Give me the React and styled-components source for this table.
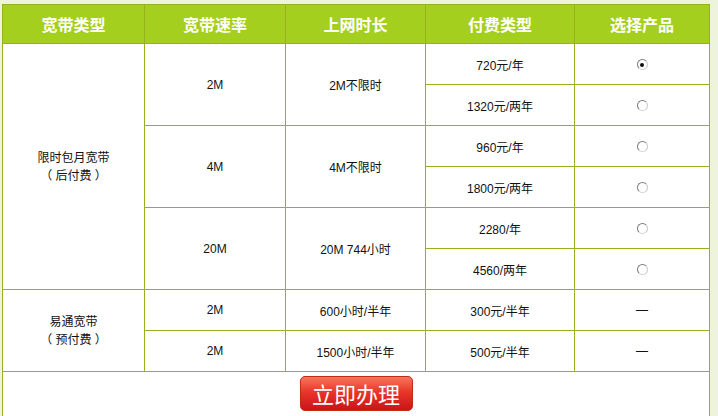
import styled, { createGlobalStyle } from 'styled-components';

const GlobalStyle = createGlobalStyle`
  html, body {
    margin: 0;
    padding: 0;
    background: #eef4dc;
  }
`

const plans = [
  {
    type: ["限时包月宽带", "（ 后付费 ）"],
    speeds: [
      { speed: "2M", time: "2M不限时", fees: ["720元/年", "1320元/两年"] },
      { speed: "4M", time: "4M不限时", fees: ["960元/年", "1800元/两年"] },
      { speed: "20M", time: "20M 744小时", fees: ["2280/年", "4560/两年"] },
    ],
    radio: true,
  },
  {
    type: ["易通宽带", "（ 预付费 ）"],
    speeds: [
      { speed: "2M", time: "600小时/半年", fees: ["300元/半年"] },
      { speed: "2M", time: "1500小时/半年", fees: ["500元/半年"] },
    ],
    radio: false,
  },
];

const Radio = ({ checked }) => (
  <RadioBox>{checked && <RadioDot />}</RadioBox>
);

const App = () => {
  let first = true;
  return <Page>
    <GlobalStyle />
    <Table>
      <colgroup>
        <col style={{ width: 142 }} />
        <col style={{ width: 141 }} />
        <col style={{ width: 140 }} />
        <col style={{ width: 149 }} />
        <col style={{ width: 135 }} />
      </colgroup>
      <thead>
        <tr>
          <Th>宽带类型</Th>
          <Th>宽带速率</Th>
          <Th>上网时长</Th>
          <Th>付费类型</Th>
          <Th>选择产品</Th>
        </tr>
      </thead>
      <tbody>
        {plans.map((plan, pi) => {
          const total = plan.speeds.reduce((n, s) => n + s.fees.length, 0);
          return plan.speeds.map((s, si) =>
            s.fees.map((fee, fi) => {
              const checked = plan.radio && first;
              if (plan.radio) first = false;
              return <tr key={`${pi}-${si}-${fi}`}>
                {si === 0 && fi === 0 &&
                  <Td rowSpan={total}>
                    <TypeName>{plan.type[0]}<br />{plan.type[1]}</TypeName>
                  </Td>}
                {fi === 0 && <Td rowSpan={s.fees.length}>{s.speed}</Td>}
                {fi === 0 && <Td rowSpan={s.fees.length}>{s.time}</Td>}
                <Td>{fee}</Td>
                <Td>{plan.radio ? <Radio checked={checked} /> : <Dash>—</Dash>}</Td>
              </tr>
            })
          );
        })}
        <tr>
          <ButtonCell colSpan={5}>
            <ApplyButton>立即办理</ApplyButton>
          </ButtonCell>
        </tr>
      </tbody>
    </Table>
  </Page>
}

export default App;

const Page = styled.div`
  width: 718px;
  height: 416px;
  overflow: hidden;
  padding: 4px 0 0 2px;
  box-sizing: border-box;
`

const Table = styled.table`
  width: 707px;
  table-layout: fixed;
  border-collapse: collapse;
  background: #ffffff;
  border: 1px solid #98b01e;
  font-family: "Liberation Sans", "Noto Sans CJK SC", sans-serif;
  font-size: 12px;
  color: #111;
`

const Th = styled.th`
  height: 38px;
  padding: 0;
  background: #a5cf1e;
  border: 1px solid #98b01e;
  color: #ffffff;
  font-family: "Noto Sans CJK SC", sans-serif;
  font-size: 16px;
  font-weight: bold;
  text-align: center;
  vertical-align: middle;
`

const Td = styled.td`
  height: 40px;
  padding: 0;
  border: 1px solid #98b01e;
  text-align: center;
  vertical-align: middle;
`

const TypeName = styled.div`
  line-height: 18px;
`

const Dash = styled.span`
  font-size: 12px;
`

const RadioBox = styled.span`
  display: inline-block;
  width: 9px;
  height: 9px;
  border-radius: 50%;
  border: 1px solid #7c7c7c;
  border-right-color: #c8c8c8;
  border-bottom-color: #d8d8d8;
  background: #fff;
  position: relative;
  vertical-align: middle;
`

const RadioDot = styled.span`
  position: absolute;
  left: 2.5px;
  top: 2.5px;
  width: 4px;
  height: 4px;
  border-radius: 50%;
  background: #111;
`

const ButtonCell = styled.td`
  height: 60px;
  padding: 4px 0 0;
  border: 1px solid #98b01e;
  text-align: center;
  vertical-align: top;
`

const ApplyButton = styled.button`
  width: 113px;
  height: 35px;
  padding: 0;
  border: 1px solid #c42a1c;
  border-radius: 5px;
  background: linear-gradient(#f7775c 0%, #e8362a 45%, #c9141a 100%);
  color: #ffffff;
  font-family: "Noto Sans CJK SC", sans-serif;
  font-size: 22px;
  line-height: 33px;
  letter-spacing: 0;
  cursor: pointer;
`
